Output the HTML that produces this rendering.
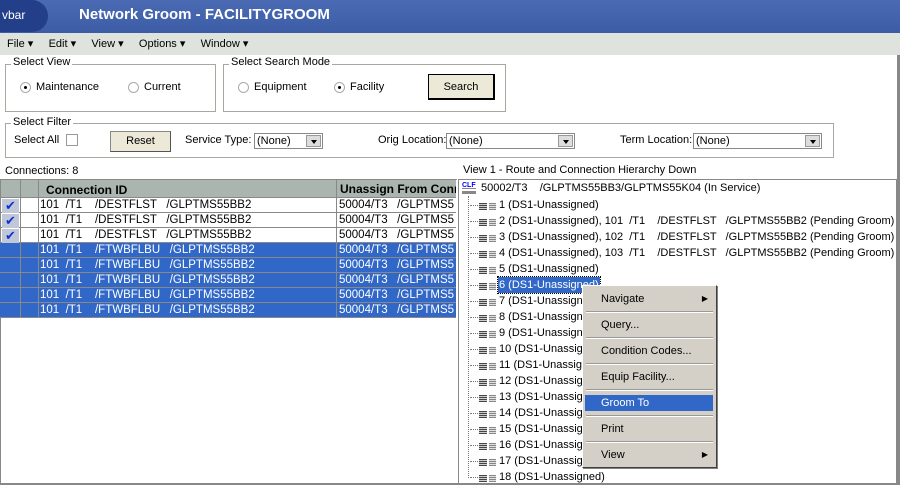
<!DOCTYPE html>
<html><head><style>
*{margin:0;padding:0;box-sizing:border-box}
body{width:900px;height:485px;overflow:hidden;background:#fff;font-family:"Liberation Sans",sans-serif;font-size:11px;color:#000;position:relative}
.a{position:absolute;white-space:nowrap}
fieldset{position:absolute;border:1px solid #a8a8a0;border-top-color:#a8a8a0}
.lg{position:absolute;background:#fff;padding:0 2px;font-size:11px}
.rad{position:absolute;width:11px;height:11px;border-radius:50%;border:1px solid #aaa;background:#fff}
.rad.on:after{content:"";position:absolute;left:3px;top:3px;width:3px;height:3px;border-radius:50%;background:#000}
.btn{position:absolute;background:#ece9d8;border:1px solid #888;border-right-color:#555;border-bottom-color:#555;text-align:center}
.sel{position:absolute;height:16px;border:1px solid #888;background:#fff;padding-left:2px;line-height:14px}
.sel i{position:absolute;right:1px;top:1px;width:15px;height:12px;background:#ddd;border:1px solid #999}
.sel i:after{content:"";position:absolute;left:4px;top:4px;border:3px solid transparent;border-top:4px solid #000;border-bottom:0}
.row{position:absolute;left:0;width:456px;height:15px;border-bottom:1px solid #888;line-height:14px;font-size:11.5px;white-space:nowrap;overflow:hidden}
.row span{position:absolute;top:0;white-space:nowrap}
.sl{background:#3168c8;color:#fff}
.t{position:absolute;left:470px;font-size:11px;white-space:nowrap;height:16px;line-height:16px}
.t:before{content:"";position:absolute;left:0;top:8px;width:10px;border-top:1px dotted #777}
.ic{position:absolute;left:9px;top:6px;width:8px;height:7px;background:repeating-linear-gradient(#444 0 1px,#ccc 1px 2px)}
.ic2{position:absolute;left:19px;top:6px;width:7px;height:7px;background:repeating-linear-gradient(#888 0 1px,#ddd 1px 2px)}
.t b{font-weight:normal;position:absolute;left:29px}
.m{position:absolute;left:583px;width:133px;height:16px;line-height:16px;padding-left:18px;font-size:11px}
.sep{position:absolute;left:586px;width:127px;border-top:1px solid #999;border-bottom:1px solid #fff}
.ck{position:absolute;left:2px;width:17px;height:14px;background:#c0c8d8;color:#1030d0;font-size:13px;line-height:14px;text-align:center}
</style></head><body>
<div class="a" style="left:0;top:0;width:900px;height:33px;background:linear-gradient(#4a6bb4,#3d5ca6)"></div>
<div class="a" style="left:0;top:0;width:48px;height:32px;background:#233f8a;border-radius:0 16px 16px 0"></div>
<div class="a" style="left:2px;top:8px;color:#fff;font-size:12px">vbar</div>
<div class="a" style="left:79px;top:6px;color:#fff;font-size:15px;font-weight:bold">Network Groom - FACILITYGROOM</div>
<div class="a" style="left:0;top:33px;width:900px;height:22px;background:#dfe3dd"></div>
<div class="a" style="left:7px;top:37px;font-size:11px">File ▾&nbsp;&nbsp;&nbsp;&nbsp; Edit ▾&nbsp;&nbsp;&nbsp;&nbsp; View ▾&nbsp;&nbsp;&nbsp;&nbsp; Options ▾&nbsp;&nbsp;&nbsp;&nbsp; Window ▾</div>
<div class="a" style="left:897px;top:55px;width:3px;height:430px;background:#888"></div>
<div class="a" style="left:0;top:483px;width:900px;height:2px;background:#888"></div>

<fieldset style="left:5px;top:64px;width:211px;height:48px"></fieldset>
<div class="lg" style="left:11px;top:56px">Select View</div>
<div class="rad on" style="left:20px;top:82px"></div><div class="a" style="left:36px;top:81px">Maintenance</div>
<div class="rad" style="left:128px;top:82px"></div><div class="a" style="left:144px;top:81px">Current</div>

<fieldset style="left:223px;top:64px;width:283px;height:48px"></fieldset>
<div class="lg" style="left:229px;top:56px">Select Search Mode</div>
<div class="rad" style="left:238px;top:82px"></div><div class="a" style="left:254px;top:81px">Equipment</div>
<div class="rad on" style="left:334px;top:82px"></div><div class="a" style="left:350px;top:81px">Facility</div>
<div class="btn" style="left:428px;top:74px;width:67px;height:26px;line-height:24px;border:1px solid #000;border-right-width:2px;border-bottom-width:2px">Search</div>

<fieldset style="left:5px;top:123px;width:829px;height:35px"></fieldset>
<div class="lg" style="left:11px;top:116px">Select Filter</div>
<div class="a" style="left:14px;top:134px">Select All</div>
<div class="a" style="left:66px;top:134px;width:12px;height:12px;border:1px solid #999"></div>
<div class="btn" style="left:110px;top:131px;width:61px;height:21px;line-height:19px">Reset</div>
<div class="a" style="left:185px;top:134px">Service Type:</div>
<div class="sel" style="left:254px;top:133px;width:69px">(None)<i></i></div>
<div class="a" style="left:378px;top:134px">Orig Location:</div>
<div class="sel" style="left:446px;top:133px;width:129px">(None)<i></i></div>
<div class="a" style="left:620px;top:134px">Term Location:</div>
<div class="sel" style="left:693px;top:133px;width:129px">(None)<i></i></div>

<div class="a" style="left:5px;top:165px">Connections: 8</div>
<div class="a" style="left:463px;top:164px">View 1 - Route and Connection Hierarchy Down</div>

<div class="a" style="left:0;top:179px;width:457px;height:306px;border:1px solid #888;border-right:none"></div>
<div class="a" style="left:1px;top:180px;width:455px;height:18px;background:#a9b5ae;border-bottom:1px solid #888"></div>
<div class="a" style="left:46px;top:183px;font-weight:bold;font-size:12px">Connection ID</div>
<div class="a" style="left:340px;top:182px;font-weight:bold;font-size:12px;width:116px;overflow:hidden">Unassign From Conn</div>

<div class="row" style="top:198px"><span style="left:40px">101 &nbsp;/T1 &nbsp;&nbsp;&nbsp;/DESTFLST &nbsp;&nbsp;/GLPTMS55BB2</span><span style="left:339px">50004/T3 &nbsp;&nbsp;/GLPTMS5</span></div>
<div class="row" style="top:213px"><span style="left:40px">101 &nbsp;/T1 &nbsp;&nbsp;&nbsp;/DESTFLST &nbsp;&nbsp;/GLPTMS55BB2</span><span style="left:339px">50004/T3 &nbsp;&nbsp;/GLPTMS5</span></div>
<div class="row" style="top:228px"><span style="left:40px">101 &nbsp;/T1 &nbsp;&nbsp;&nbsp;/DESTFLST &nbsp;&nbsp;/GLPTMS55BB2</span><span style="left:339px">50004/T3 &nbsp;&nbsp;/GLPTMS5</span></div>
<div class="row sl" style="top:243px"><span style="left:40px">101 &nbsp;/T1 &nbsp;&nbsp;&nbsp;/FTWBFLBU &nbsp;&nbsp;/GLPTMS55BB2</span><span style="left:339px">50004/T3 &nbsp;&nbsp;/GLPTMS5</span></div>
<div class="row sl" style="top:258px"><span style="left:40px">101 &nbsp;/T1 &nbsp;&nbsp;&nbsp;/FTWBFLBU &nbsp;&nbsp;/GLPTMS55BB2</span><span style="left:339px">50004/T3 &nbsp;&nbsp;/GLPTMS5</span></div>
<div class="row sl" style="top:273px"><span style="left:40px">101 &nbsp;/T1 &nbsp;&nbsp;&nbsp;/FTWBFLBU &nbsp;&nbsp;/GLPTMS55BB2</span><span style="left:339px">50004/T3 &nbsp;&nbsp;/GLPTMS5</span></div>
<div class="row sl" style="top:288px"><span style="left:40px">101 &nbsp;/T1 &nbsp;&nbsp;&nbsp;/FTWBFLBU &nbsp;&nbsp;/GLPTMS55BB2</span><span style="left:339px">50004/T3 &nbsp;&nbsp;/GLPTMS5</span></div>
<div class="row sl" style="top:303px"><span style="left:40px">101 &nbsp;/T1 &nbsp;&nbsp;&nbsp;/FTWBFLBU &nbsp;&nbsp;/GLPTMS55BB2</span><span style="left:339px">50004/T3 &nbsp;&nbsp;/GLPTMS5</span></div>
<div class="a" style="left:20px;top:180px;width:1px;height:138px;background:#888"></div>
<div class="a" style="left:38px;top:180px;width:1px;height:138px;background:#888"></div>
<div class="a" style="left:336px;top:180px;width:1px;height:138px;background:#888"></div>
<div class="ck" style="top:199px">✔</div>
<div class="ck" style="top:214px">✔</div>
<div class="ck" style="top:229px">✔</div>

<div class="a" style="left:458px;top:179px;width:439px;height:306px;border:1px solid #888"></div>
<div class="a" style="left:462px;top:182px;width:14px;height:12px;font-size:7px;color:#00f;font-weight:bold;background:linear-gradient(transparent 6px,#888 6px,#888 7px,transparent 7px,transparent 9px,#888 9px)">CLF</div>
<div class="a" style="left:481px;top:182px;font-size:11px">50002/T3 &nbsp;&nbsp;&nbsp;/GLPTMS55BB3/GLPTMS55K04 (In Service)</div>
<div class="a" style="left:468px;top:196px;height:282px;border-left:1px dotted #777"></div>

<div class="t" style="top:197px"><i class="ic"></i><i class="ic2"></i><b>1 (DS1-Unassigned)</b></div>
<div class="t" style="top:213px"><i class="ic"></i><i class="ic2"></i><b>2 (DS1-Unassigned), 101 &nbsp;/T1 &nbsp;&nbsp;&nbsp;/DESTFLST &nbsp;&nbsp;/GLPTMS55BB2 (Pending Groom)</b></div>
<div class="t" style="top:229px"><i class="ic"></i><i class="ic2"></i><b>3 (DS1-Unassigned), 102 &nbsp;/T1 &nbsp;&nbsp;&nbsp;/DESTFLST &nbsp;&nbsp;/GLPTMS55BB2 (Pending Groom)</b></div>
<div class="t" style="top:245px"><i class="ic"></i><i class="ic2"></i><b>4 (DS1-Unassigned), 103 &nbsp;/T1 &nbsp;&nbsp;&nbsp;/DESTFLST &nbsp;&nbsp;/GLPTMS55BB2 (Pending Groom)</b></div>
<div class="t" style="top:261px"><i class="ic"></i><i class="ic2"></i><b>5 (DS1-Unassigned)</b></div>
<div class="t" style="top:277px"><i class="ic"></i><i class="ic2"></i><b style="background:#3168c8;color:#fff;left:28px;padding:0 1px;outline:1px dotted #000">6 (DS1-Unassigned)</b></div>
<div class="t" style="top:293px"><i class="ic"></i><i class="ic2"></i><b>7 (DS1-Unassigned)</b></div>
<div class="t" style="top:309px"><i class="ic"></i><i class="ic2"></i><b>8 (DS1-Unassigned)</b></div>
<div class="t" style="top:325px"><i class="ic"></i><i class="ic2"></i><b>9 (DS1-Unassigned)</b></div>
<div class="t" style="top:341px"><i class="ic"></i><i class="ic2"></i><b>10 (DS1-Unassigned)</b></div>
<div class="t" style="top:357px"><i class="ic"></i><i class="ic2"></i><b>11 (DS1-Unassigned)</b></div>
<div class="t" style="top:373px"><i class="ic"></i><i class="ic2"></i><b>12 (DS1-Unassigned)</b></div>
<div class="t" style="top:389px"><i class="ic"></i><i class="ic2"></i><b>13 (DS1-Unassigned)</b></div>
<div class="t" style="top:405px"><i class="ic"></i><i class="ic2"></i><b>14 (DS1-Unassigned)</b></div>
<div class="t" style="top:421px"><i class="ic"></i><i class="ic2"></i><b>15 (DS1-Unassigned)</b></div>
<div class="t" style="top:437px"><i class="ic"></i><i class="ic2"></i><b>16 (DS1-Unassigned)</b></div>
<div class="t" style="top:453px"><i class="ic"></i><i class="ic2"></i><b>17 (DS1-Unassigned)</b></div>
<div class="t" style="top:469px"><i class="ic"></i><i class="ic2"></i><b>18 (DS1-Unassigned)</b></div>

<div class="a" style="left:582px;top:285px;width:135px;height:183px;background:#d4d0c8;border:1px solid #fff;border-right-color:#404040;border-bottom-color:#404040;box-shadow:1px 1px 0 #808080"></div>
<div class="m" style="top:291px">Navigate<span style="position:absolute;right:8px;font-size:8px">▶</span></div>
<div class="sep" style="top:311px"></div>
<div class="m" style="top:317px">Query...</div>
<div class="sep" style="top:337px"></div>
<div class="m" style="top:343px">Condition Codes...</div>
<div class="sep" style="top:363px"></div>
<div class="m" style="top:369px">Equip Facility...</div>
<div class="sep" style="top:389px"></div>
<div class="m" style="top:395px;background:#3168c8;color:#fff;left:585px;width:128px;padding-left:16px">Groom To</div>
<div class="sep" style="top:415px"></div>
<div class="m" style="top:421px">Print</div>
<div class="sep" style="top:441px"></div>
<div class="m" style="top:447px">View<span style="position:absolute;right:8px;font-size:8px">▶</span></div>
</body></html>
